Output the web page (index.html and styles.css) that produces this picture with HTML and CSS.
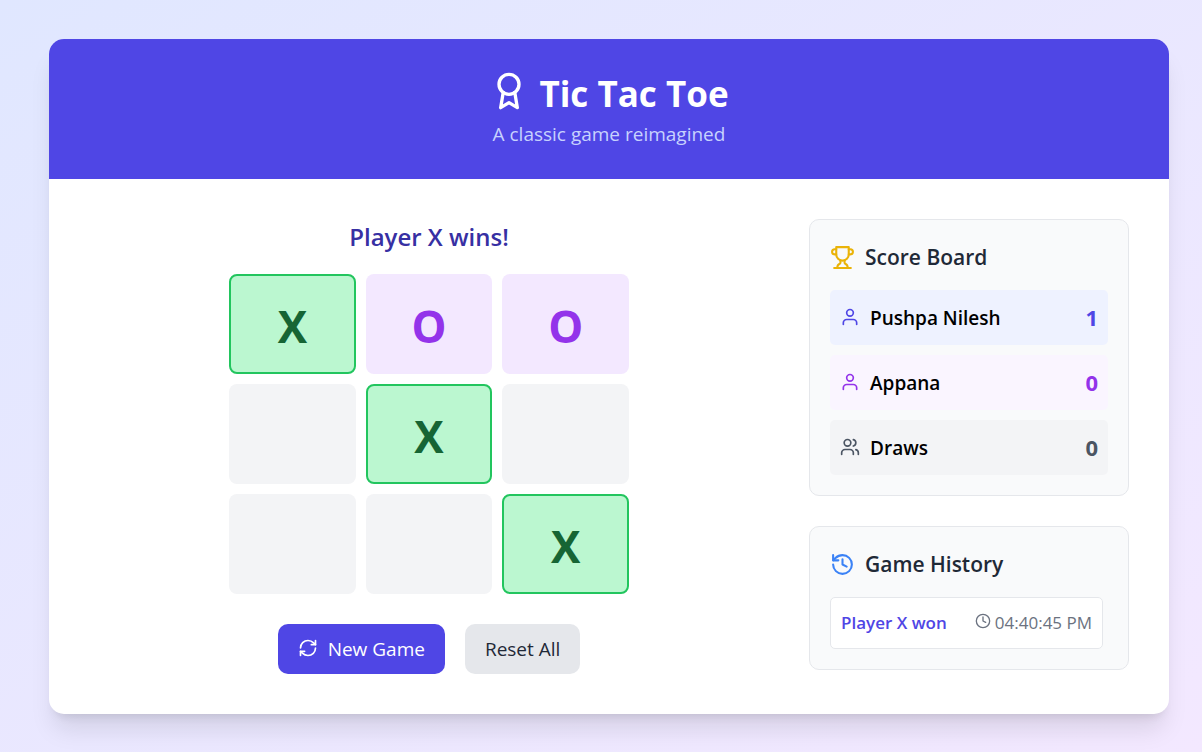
FILE: index.html
```html
<!DOCTYPE html>
<html lang="en">
<head>
<meta charset="utf-8">
<meta name="viewport" content="width=device-width, initial-scale=1">
<title>Tic Tac Toe</title>
<link rel="stylesheet" href="styles.css">
</head>
<body>
<div class="card">
  <header class="header">
    <h1 class="title">
      <svg class="icon icon-award" viewBox="0 0 24 24"><circle cx="12" cy="8" r="6"/><path d="M15.477 12.89 17 22l-5-3-5 3 1.523-9.11"/></svg>
      Tic Tac Toe
    </h1>
    <p class="tagline">A classic game reimagined</p>
  </header>
  <main class="content">
    <section class="game">
      <p class="status">Player X wins!</p>
      <div class="board">
        <button class="cell win">X</button>
        <button class="cell o">O</button>
        <button class="cell o">O</button>
        <button class="cell" aria-label="Empty square"></button>
        <button class="cell win">X</button>
        <button class="cell" aria-label="Empty square"></button>
        <button class="cell" aria-label="Empty square"></button>
        <button class="cell" aria-label="Empty square"></button>
        <button class="cell win">X</button>
      </div>
      <div class="actions">
        <button class="btn btn-primary">
          <svg class="icon icon-md" viewBox="0 0 24 24"><path d="M3 12a9 9 0 0 1 9-9 9.75 9.75 0 0 1 6.74 2.74L21 8"/><path d="M21 3v5h-5"/><path d="M21 12a9 9 0 0 1-9 9 9.75 9.75 0 0 1-6.74-2.74L3 16"/><path d="M8 16H3v5"/></svg>
          New Game
        </button>
        <button class="btn btn-secondary">Reset All</button>
      </div>
    </section>
    <aside class="sidebar">
      <section class="panel">
        <h2 class="panel-title">
          <svg class="icon icon-lg gold" viewBox="0 0 24 24"><path d="M6 9H4.500a2.500 2.500 0 0 1 0-5H6"/><path d="M18 9h1.500a2.500 2.500 0 0 0 0-5H18"/><path d="M4 22h16"/><path d="M10 14.660V17c0 .55-.47.98-.97 1.210C7.850 18.750 7 20.240 7 22"/><path d="M14 14.660V17c0 .55.47.98.97 1.210C16.150 18.750 17 20.240 17 22"/><path d="M18 2H6v7a6 6 0 0 0 12 0V2Z"/></svg>
          Score Board
        </h2>
        <ul class="scores">
          <li class="score score-x">
            <svg class="icon icon-md" viewBox="0 0 24 24"><circle cx="12" cy="7" r="4"/><path d="M20 21v-2a4 4 0 0 0-4-4H8a4 4 0 0 0-4 4v2"/></svg>
            <span class="name">Pushpa Nilesh</span><span class="points">1</span>
          </li>
          <li class="score score-o">
            <svg class="icon icon-md" viewBox="0 0 24 24"><circle cx="12" cy="7" r="4"/><path d="M20 21v-2a4 4 0 0 0-4-4H8a4 4 0 0 0-4 4v2"/></svg>
            <span class="name">Appana</span><span class="points">0</span>
          </li>
          <li class="score score-draw">
            <svg class="icon icon-md" viewBox="0 0 24 24"><path d="M16 21v-2a4 4 0 0 0-4-4H6a4 4 0 0 0-4 4v2"/><circle cx="9" cy="7" r="4"/><path d="M22 21v-2a4 4 0 0 0-3-3.870"/><path d="M16 3.130a4 4 0 0 1 0 7.750"/></svg>
            <span class="name">Draws</span><span class="points">0</span>
          </li>
        </ul>
      </section>
      <section class="panel">
        <h2 class="panel-title">
          <svg class="icon icon-lg blue" viewBox="0 0 24 24"><path d="M3 12a9 9 0 1 0 9-9 9.750 9.750 0 0 0-6.740 2.740L3 8"/><path d="M3 3v5h5"/><path d="M12 7v5l4 2"/></svg>
          Game History
        </h2>
        <ul class="history">
          <li class="entry">
            <span class="result">Player X won</span>
            <span class="time"><svg class="icon icon-sm" viewBox="0 0 24 24"><circle cx="12" cy="12" r="10"/><path d="M12 6v6l4 2"/></svg>04:40:45 PM</span>
          </li>
        </ul>
      </section>
    </aside>
  </main>
</div>
</body>
</html>
```
FILE: styles.css
```css
* { box-sizing: border-box; }

body {
  margin: 0;
  min-height: 100vh;
  padding: 39px 33px 38px 49px;
  background: linear-gradient(to bottom right, #e0e7ff, #f3e8ff);
  font-family: "Open Sans", "Noto Sans", sans-serif;
  font-size: 19px;
  line-height: 30px;
}

h1, h2, p, ul { margin: 0; padding: 0; }
ul { list-style: none; }
button { font: inherit; border: 0; cursor: pointer; }

.icon {
  flex: none;
  fill: none;
  stroke: currentColor;
  stroke-width: 2;
  stroke-linecap: round;
  stroke-linejoin: round;
}
.icon-award { width: 40px; height: 40px; margin-bottom: 6px; }
.icon-lg { width: 25px; height: 25px; }
.icon-md { width: 20px; height: 20px; margin-bottom: 2px; }
.icon-sm { width: 16px; height: 16px; margin-bottom: 4px; }
.gold { color: #eab308; }
.blue { color: #3b82f6; }

.card {
  max-width: 1120px;
  margin: 0 auto;
  border-radius: 15px;
  overflow: hidden;
  background: #fff;
  box-shadow: 0 20px 25px -5px rgb(0 0 0 / 0.1), 0 8px 10px -6px rgb(0 0 0 / 0.1);
}

.header {
  padding: 30px;
  background: #4f46e5;
  color: #fff;
  text-align: center;
}
.title {
  display: flex;
  align-items: center;
  justify-content: center;
  gap: 10px;
  font-size: 35px;
  font-weight: 700;
  line-height: 50px;
}
.tagline { color: #c7d2fe; }

.content {
  display: grid;
  grid-template-columns: 17fr 8fr;
  gap: 40px;
  padding: 40px;
}

.game { display: flex; flex-direction: column; align-items: center; }
.status {
  margin-bottom: 20px;
  color: #3730a3;
  font-size: 24px;
  font-weight: 600;
  line-height: 35px;
}
.board {
  display: grid;
  grid-template-columns: repeat(3, 1fr);
  grid-auto-rows: 100px;
  gap: 10px;
  width: 100%;
  max-width: 400px;
}
.cell {
  padding: 4px 0 0;
  border-radius: 8px;
  background: #f3f4f6;
  font-size: 44px;
  font-weight: 700;
  line-height: 50px;
}
.cell.o { background: #f3e8ff; color: #9333ea; }
.cell.win {
  border: 2px solid #22c55e;
  background: #bbf7d0;
  color: #166534;
}

.actions { display: flex; gap: 20px; margin-top: 30px; }
.btn {
  display: flex;
  align-items: center;
  gap: 10px;
  padding: 10px 20px;
  border-radius: 10px;
}
.btn-primary { background: #4f46e5; color: #fff; }
.btn-secondary { background: #e5e7eb; color: #1f2937; }

.sidebar { display: flex; flex-direction: column; gap: 30px; }
.panel {
  padding: 20px;
  border: 1px solid #e5e7eb;
  border-radius: 10px;
  background: #f9fafb;
}
.panel-title {
  display: flex;
  align-items: center;
  gap: 10px;
  margin-bottom: 15px;
  color: #1f2937;
  font-size: 21px;
  font-weight: 600;
  line-height: 35px;
}

.scores { display: flex; flex-direction: column; gap: 10px; }
.score {
  display: flex;
  align-items: center;
  gap: 10px;
  padding: 10px;
  border-radius: 5px;
}
.name { flex: 1; color: #000; font-weight: 600; }
.points { font-size: 22px; font-weight: 700; line-height: 35px; }
.score-x { background: #eef2ff; color: #4f46e5; }
.score-o { background: #faf5ff; color: #9333ea; }
.score-draw { background: #f3f4f6; color: #4b5563; }

.history { padding-right: 5px; }
.entry {
  display: flex;
  align-items: center;
  justify-content: space-between;
  padding: 10px;
  border: 1px solid #e5e7eb;
  border-radius: 5px;
  background: #fff;
  font-size: 17px;
}
.result { color: #4f46e5; font-weight: 600; }
.time { display: flex; align-items: center; gap: 4px; color: #6b7280; }
```
